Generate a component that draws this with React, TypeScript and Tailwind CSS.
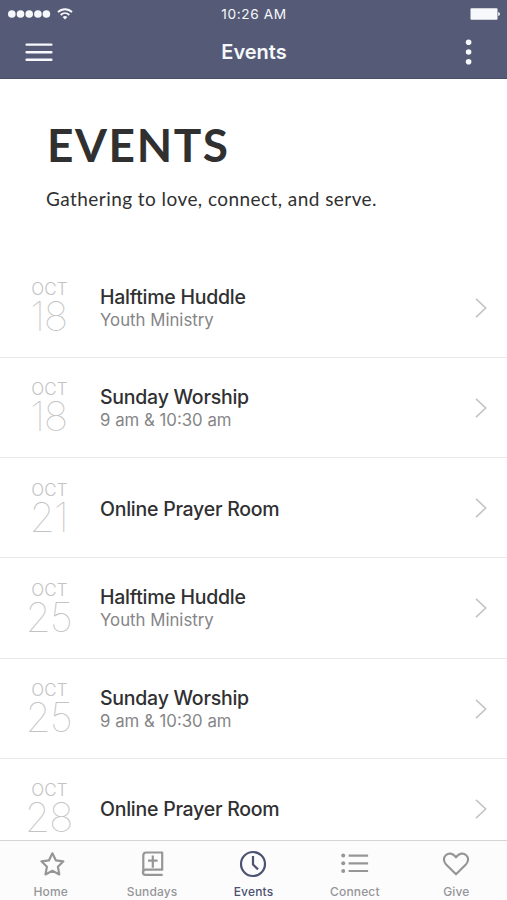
import React from 'react';

interface EventItem {
  day: string;
  title: string;
  subtitle?: string;
}

const events: EventItem[] = [
  { day: '18', title: 'Halftime Huddle', subtitle: 'Youth Ministry' },
  { day: '18', title: 'Sunday Worship', subtitle: '9 am & 10:30 am' },
  { day: '21', title: 'Online Prayer Room' },
  { day: '25', title: 'Halftime Huddle', subtitle: 'Youth Ministry' },
  { day: '25', title: 'Sunday Worship', subtitle: '9 am & 10:30 am' },
  { day: '28', title: 'Online Prayer Room' },
];

const StatusBar: React.FC = () => (
  <div className="grid h-7 grid-cols-3 items-center pl-2 pr-[7px]">
    <div className="flex items-center">
      <svg className="h-2 w-[43px]" viewBox="0 0 43 8" fill="currentColor">
        <circle cx="3.8" cy="4" r="3.8" />
        <circle cx="12.5" cy="4" r="3.8" />
        <circle cx="21.2" cy="4" r="3.8" />
        <circle cx="29.9" cy="4" r="3.8" />
        <circle cx="38.4" cy="4" r="3.8" />
      </svg>
      <svg className="ml-1.5 h-3 w-4" viewBox="0 0 16 12" fill="none" stroke="currentColor" strokeWidth="1.9">
        <path d="M1 4.2C5 .2 11 .2 15 4.2" />
        <path d="M3.7 7C6.2 4.5 9.8 4.5 12.3 7" />
        <path d="M5.6 9Q8 6.9 10.4 9L8 11.5Z" fill="currentColor" stroke="none" />
      </svg>
    </div>
    <span className="pt-px text-center text-[13.7px] leading-none tracking-[0.6px]">10:26 AM</span>
    <svg className="h-3 w-[30px] justify-self-end" viewBox="0 0 30 12" fill="currentColor">
      <rect x="0.5" y="0.3" width="27" height="11.4" rx="1" />
      <path d="M28.2 4Q30 4.3 30 6T28.2 8Z" />
    </svg>
  </div>
);

const NavBar: React.FC = () => (
  <div className="grid h-[51px] grid-cols-3 items-center pb-[3px] pl-[25px] pr-[34px]">
    <button aria-label="Menu">
      <svg className="h-[22px] w-7" viewBox="0 0 28 22" stroke="currentColor" strokeWidth="2.4" strokeLinecap="round">
        <path d="M1.6 3.6h24.8M1.6 11.2h24.8M1.6 18.7h24.8" />
      </svg>
    </button>
    <h1 className="pl-[10px] text-center text-[20px] font-semibold leading-none">Events</h1>
    <button aria-label="More options" className="justify-self-end">
      <svg className="h-[26px] w-2" viewBox="0 0 8 26" fill="currentColor">
        <circle cx="3.6" cy="3.3" r="2.8" />
        <circle cx="3.6" cy="13" r="2.8" />
        <circle cx="3.6" cy="22.8" r="2.8" />
      </svg>
    </button>
  </div>
);

const EventRow: React.FC<{ event: EventItem }> = ({ event }) => (
  <li className="flex h-[100.25px] items-center border-b border-[#e9e9ea] pt-px">
    <div className="flex w-[100px] flex-col items-center text-[#c3c3c4]">
      <span className="pr-px text-[17px] font-light leading-[18px] tracking-[0.2px]">OCT</span>
      <span className="pr-[3px] text-[41px] font-thin leading-[37px] tracking-[-1.2px]">{event.day}</span>
    </div>
    <div className="flex flex-1 flex-col pt-px">
      <span className="text-[19.5px] font-medium leading-6 tracking-[-0.25px] text-[#303032]">{event.title}</span>
      {event.subtitle && (
        <span className="text-[16.8px] leading-[23px] text-[#858587]">{event.subtitle}</span>
      )}
    </div>
    <svg className="mr-5 h-5 w-3" viewBox="0 0 12 20" fill="none" stroke="#c4c4c7" strokeWidth="1.6">
      <path d="M1 .8L10.7 10L1 19.2" />
    </svg>
  </li>
);

interface TabProps {
  label: string;
  active?: boolean;
  children: React.ReactNode;
}

const Tab: React.FC<TabProps> = ({ label, active = false, children }) => (
  <button className={`flex flex-col items-center pt-2 ${active ? 'text-[#4d5271]' : 'text-[#969698]'}`}>
    <svg
      className="h-[30px] w-[30px]"
      viewBox="0 0 30 30"
      fill="none"
      stroke="currentColor"
      strokeWidth="2.2"
      strokeLinejoin="round"
    >
      {children}
    </svg>
    <span className="mt-[5px] text-[12px] font-medium leading-4 tracking-[0.15px]">{label}</span>
  </button>
);

const TabBar: React.FC = () => (
  <nav className="grid h-[60px] shrink-0 grid-cols-5 border-t border-[#d4d4d6] bg-[#fcfcfd]">
    <Tab label="Home">
      <path d="M16.4 4.3L19.8 11.3L27.4 12.3L21.9 17.7L23.3 25.4L16.4 21.8L9.5 25.4L10.9 17.7L5.4 12.3L13 11.3Z" />
    </Tab>
    <Tab label="Sundays">
      <path d="M25.7 20.7H8.5a2.2 2.2 0 0 0 0 5.2H25.7M25.2 21.5V3.5H9.3a3 3 0 0 0-3 3V23.5" />
      <path d="M15.8 6.5v12.3M11 11.6h9.6" />
    </Tab>
    <Tab label="Events" active>
      <circle cx="15" cy="15" r="12" />
      <path d="M15 7v8.5l5 4.9" />
    </Tab>
    <Tab label="Connect">
      <g fill="currentColor" stroke="none">
        <circle cx="3.2" cy="6.6" r="2" />
        <circle cx="3.2" cy="14.3" r="2" />
        <circle cx="3.2" cy="22" r="2" />
      </g>
      <path d="M8.6 6.6h19.5M8.6 14.3h19.5M8.6 22h19.5" />
    </Tab>
    <Tab label="Give">
      <path d="M15 25.3L5.1 15.5C2.2 12.4 2.3 8.6 4.8 6.3C7.7 3.6 11.8 4.1 15 8.2C18.2 4.1 22.3 3.6 25.2 6.3C27.7 8.6 27.8 12.4 24.9 15.5Z" />
    </Tab>
  </nav>
);

const App: React.FC = () => {
  return (
    <div className="flex h-[900px] w-[507px] flex-col overflow-hidden bg-white font-['Inter','Liberation_Sans',sans-serif]">
      <header className="h-[79px] shrink-0 border-b border-[#484e68] bg-[#555b76] text-[#f7f8fc]">
        <StatusBar />
        <NavBar />
      </header>
      <main className="min-h-0 flex-1 overflow-hidden">
        <section className="h-[178.5px] pl-[46px] pt-10 font-['Lato','Liberation_Sans',sans-serif] text-[#303031]">
          <h2 className="pl-px text-[46px] font-bold leading-[52px] tracking-[1.6px]">EVENTS</h2>
          <p className="mt-[15px] text-[19px] leading-[26px] tracking-[0.44px]">
            Gathering to love, connect, and serve.
          </p>
        </section>
        <ul>
          {events.map((event, index) => (
            <EventRow key={index} event={event} />
          ))}
        </ul>
      </main>
      <TabBar />
    </div>
  );
};

export default App;
